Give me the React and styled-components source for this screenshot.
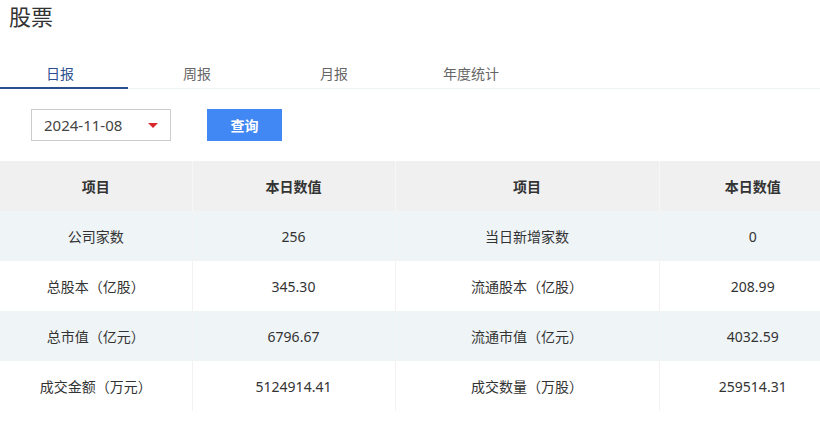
import React, {useState} from "react"
import styled, {createGlobalStyle} from "styled-components"

const GlobalStyle = createGlobalStyle`
  body {
    margin: 0;
    background: #fff;
    font-family: "Microsoft YaHei", "Noto Sans CJK SC", sans-serif;
    color: #333;
  }
`

const rows = [
  ["公司家数", "256", "当日新增家数", "0"],
  ["总股本（亿股）", "345.30", "流通股本（亿股）", "208.99"],
  ["总市值（亿元）", "6796.67", "流通市值（亿元）", "4032.59"],
  ["成交金额（万元）", "5124914.41", "成交数量（万股）", "259514.31"],
]

const tabs = ["日报", "周报", "月报", "年度统计"]

function App(){
  const [active, setActive] = useState(0)

  return(
    <Page>
      <GlobalStyle />
      <Title>股票</Title>
      <TabBar>
        {tabs.map((t, i) => (
          <Tab key={t} $active={i === active} onClick={() => setActive(i)}>{t}</Tab>
        ))}
      </TabBar>
      <Toolbar>
        <DateSelect>
          <span>2024-11-08</span>
          <Caret />
        </DateSelect>
        <QueryButton>查询</QueryButton>
      </Toolbar>
      <Table>
        <colgroup>
          <col style={{width: 192}} />
          <col style={{width: 203}} />
          <col style={{width: 264}} />
          <col />
        </colgroup>
        <thead>
          <tr>
            <Th>项目</Th>
            <Th>本日数值</Th>
            <Th>项目</Th>
            <Th>本日数值</Th>
          </tr>
        </thead>
        <tbody>
          {rows.map((r, i) => (
            <Row key={i} $striped={i % 2 === 0}>
              {r.map((c, j) => <Td key={j}>{c}</Td>)}
            </Row>
          ))}
        </tbody>
      </Table>
    </Page>
  )
}

const Page = styled.div`
  width: 820px;
  overflow: hidden;
`

const Title = styled.h1`
  margin: 0;
  padding: 0 0 0 9px;
  line-height: 30px;
  font-size: 22px;
  font-weight: normal;
  color: #333;
`

const TabBar = styled.div`
  display: flex;
  margin-top: 30px;
  border-bottom: 1px solid #eef3f3;
  height: 28px;
`

const Tab = styled.div`
  box-sizing: border-box;
  width: 128px;
  margin-right: 9px;
  text-align: center;
  text-indent: -8px;
  font-size: 14px;
  line-height: 26px;
  color: ${p => p.$active ? "#2c4f8f" : "#666"};
  border-bottom: ${p => p.$active ? "2px solid #2b4e8c" : "none"};
  margin-bottom: -1px;
  cursor: pointer;
`

const Toolbar = styled.div`
  display: flex;
  align-items: center;
  gap: 36px;
  padding: 20px 0 0 31px;
  height: 32px;
`

const DateSelect = styled.div`
  box-sizing: border-box;
  width: 140px;
  height: 32px;
  border: 1px solid #ccc;
  display: flex;
  align-items: center;
  justify-content: space-between;
  padding: 0 12px 0 12px;
  font-family: "Microsoft YaHei", "Noto Sans", "Noto Sans CJK SC", sans-serif;
  font-size: 15px;
  color: #444;
`

const Caret = styled.i`
  width: 0;
  height: 0;
  border-left: 5px solid transparent;
  border-right: 5px solid transparent;
  border-top: 5px solid #d8262b;
`

const QueryButton = styled.button`
  width: 75px;
  height: 32px;
  border: none;
  background: #4288f4;
  color: #fff;
  font-size: 14px;
  font-weight: bold;
  font-family: "Noto Sans CJK SC", sans-serif;
`

const Table = styled.table`
  margin-top: 20px;
  width: 847px;
  border-collapse: collapse;
  table-layout: fixed;
  font-size: 14px;
`

const Th = styled.th`
  height: 50px;
  padding: 0;
  background: #f0f0f0;
  font-weight: bold;
  color: #333;
  border-right: 1px solid #f7f7f7;
`

const Row = styled.tr`
  background: ${p => p.$striped ? "#eff4f7" : "#fff"};
`

const Td = styled.td`
  height: 50px;
  padding: 0;
  text-align: center;
  color: #333;
  border-right: 1px solid #f2f2f2;
  font-family: "Microsoft YaHei", "Noto Sans", "Noto Sans CJK SC", sans-serif;
`

export default App
